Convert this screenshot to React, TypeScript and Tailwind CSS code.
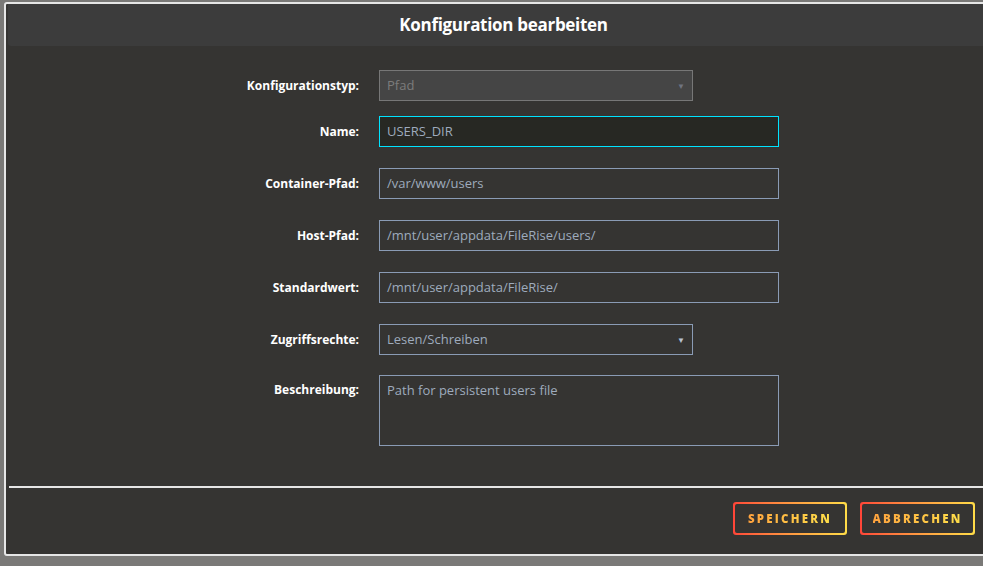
import React from "react";

const rows = [
  { label: "Container-Pfad:", value: "/var/www/users" },
  { label: "Host-Pfad:", value: "/mnt/user/appdata/FileRise/users/" },
  { label: "Standardwert:", value: "/mnt/user/appdata/FileRise/" },
];

function Label({ children }: { children: React.ReactNode }) {
  return (
    <div className="w-[352px] shrink-0 text-right text-[12px] font-bold text-white">
      {children}
    </div>
  );
}

function GradientButton({ children }: { children: React.ReactNode }) {
  return (
    <div className="rounded-[3px] bg-gradient-to-r from-[#ff4438] to-[#ffdc48] p-[2px]">
      <div className="flex h-[29px] items-center justify-center rounded-[2px] bg-[#353432]">
        <span className="bg-gradient-to-r from-[#ffa23e] to-[#ffe04a] bg-clip-text text-[11.5px] font-extrabold tracking-[2.2px] text-transparent">
          {children}
        </span>
      </div>
    </div>
  );
}

export default function App() {
  return (
    <div
      className="h-[566px] w-[983px] overflow-hidden bg-[#7a7977] pt-[2px] pl-[4px]"
      style={{ fontFamily: '"Open Sans", "Noto Sans", sans-serif' }}
    >
      <div className="flex h-[554px] w-[998px] flex-col rounded-[3px] border-2 border-[#e6e6e6] bg-[#353432] px-[1px]">
        <div className="ml-[1px] flex h-[42px] items-center justify-center rounded-b-[3px] bg-[#3c3c3c]">
          <h1 className="text-[17px] font-bold tracking-[-0.3px] text-white">
            Konfiguration bearbeiten
          </h1>
        </div>

        <div className="flex flex-col pt-[24px]">
          <div className="flex items-center">
            <Label>Konfigurationstyp:</Label>
            <div className="ml-[20px] flex h-[31px] w-[314px] items-center justify-between border border-[#777] bg-[#454545] px-[7px] text-[13px] text-[#7c7c7c]">
              <span>Pfad</span>
              <span className="text-[8px] text-[#6f7480]">▼</span>
            </div>
          </div>

          <div className="mt-[15px] flex items-center">
            <Label>Name:</Label>
            <div className="ml-[20px] flex h-[31px] w-[400px] items-center border border-[#00e3ff] bg-[#272823] px-[7px] text-[13px] text-[#9eabbd]">
              USERS_DIR
            </div>
          </div>

          {rows.map((r) => (
            <div key={r.label} className="mt-[21px] flex items-center">
              <Label>{r.label}</Label>
              <div className="ml-[20px] flex h-[31px] w-[400px] items-center border border-[#8a9bb5] bg-[#353432] px-[7px] text-[13px] text-[#9eabbd]">
                {r.value}
              </div>
            </div>
          ))}

          <div className="mt-[21px] flex items-center">
            <Label>Zugriffsrechte:</Label>
            <div className="ml-[20px] flex h-[31px] w-[314px] items-center justify-between border border-[#8a9bb5] bg-[#353432] px-[7px] text-[13px] text-[#9eabbd]">
              <span>Lesen/Schreiben</span>
              <span className="text-[8px] text-[#b8c2d2]">▼</span>
            </div>
          </div>

          <div className="mt-[20px] flex items-start">
            <div className="pt-[6px]">
              <Label>Beschreibung:</Label>
            </div>
            <div className="ml-[20px] h-[71px] w-[400px] border border-[#8a9bb5] bg-[#353432] px-[7px] pt-[5px] text-[13px] text-[#9eabbd]">
              Path for persistent users file
            </div>
          </div>
        </div>

        <div className="mt-[40px] ml-[2px] h-[2px] bg-[#e6e6e6]" />

        <div className="flex justify-end gap-[13px] pt-[14px] pr-[24px]">
          <div className="w-[114px]">
            <GradientButton>SPEICHERN</GradientButton>
          </div>
          <div className="w-[115px]">
            <GradientButton>ABBRECHEN</GradientButton>
          </div>
        </div>
      </div>
    </div>
  );
}
